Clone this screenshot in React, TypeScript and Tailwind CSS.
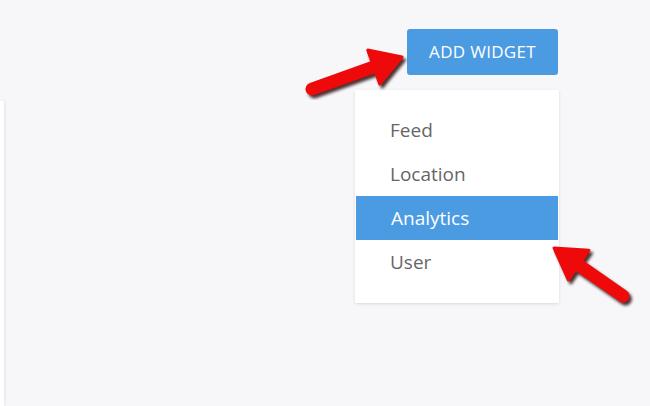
import React from "react";

function Arrow({ tail, tip, width = 13, headLen = 30, headWidth = 36 }: { tail: [number, number]; tip: [number, number]; width?: number; headLen?: number; headWidth?: number }) {
  const [tx, ty] = tail;
  const [px, py] = tip;
  const dx = px - tx;
  const dy = py - ty;
  const len = Math.hypot(dx, dy);
  const ux = dx / len;
  const uy = dy / len;
  const nx = -uy;
  const ny = ux;
  const bx = px - ux * headLen;
  const by = py - uy * headLen;
  const h = headWidth / 2;
  const head = `${px},${py} ${bx + nx * h},${by + ny * h} ${bx - nx * h},${by - ny * h}`;
  return (
    <g>
      <g transform="translate(2.5,3)" opacity="0.8" filter="url(#blur)">
        <line x1={tx} y1={ty} x2={bx + ux * 4} y2={by + uy * 4} stroke="#200" strokeWidth={width} strokeLinecap="round" />
        <polygon points={head} fill="#200" strokeLinejoin="round" stroke="#200" strokeWidth={3} />
      </g>
      <line x1={tx} y1={ty} x2={bx + ux * 4} y2={by + uy * 4} stroke="#ee0a0a" strokeWidth={width} strokeLinecap="round" />
      <polygon points={head} fill="#ee0a0a" strokeLinejoin="round" stroke="#ee0a0a" strokeWidth={3} />
    </g>
  );
}

export default function App() {
  const items = ["Feed", "Location", "Analytics", "User"];
  return (
    <div
      className="relative w-[650px] h-[406px] overflow-hidden bg-[#f7f7fa] flex flex-col"
      style={{ fontFamily: '"Open Sans", "Noto Sans", sans-serif' }}
    >
      <div className="flex justify-end pt-[29px] pr-[92px]">
        <button className="w-[151px] h-[46px] rounded-[3px] bg-[#4a9be2] text-white text-[17px] tracking-[0.3px] flex items-center justify-center">
          ADD WIDGET
        </button>
      </div>
      <div className="flex-1 mt-[26px] flex">
        <div className="w-[4px] bg-white shadow-[1px_0_3px_rgba(0,0,0,0.08)]" />
      </div>

      <div className="absolute left-[355px] top-[90px] w-[204px] h-[213px] bg-white shadow-[0_1px_3px_rgba(0,0,0,0.12)] pt-[18px] pb-[19px]">
        {items.map((it) => (
          <div
            key={it}
            className={
              "h-[44px] flex items-center pl-[35px] text-[19px] " +
              (it === "Analytics" ? "bg-[#4a9be2] text-white mx-[1px] pl-[34px]" : "text-[#666666]")
            }
          >
            {it}
          </div>
        ))}
      </div>

      <svg className="absolute left-0 top-0 pointer-events-none" width="650" height="406">
        <defs>
          <filter id="blur" x="-20%" y="-20%" width="140%" height="140%">
            <feGaussianBlur stdDeviation="1.6" />
          </filter>
        </defs>
        <Arrow tail={[312, 89]} tip={[402, 57]} />
        <Arrow tail={[623, 296]} tip={[554, 248]} />
      </svg>
    </div>
  );
}
